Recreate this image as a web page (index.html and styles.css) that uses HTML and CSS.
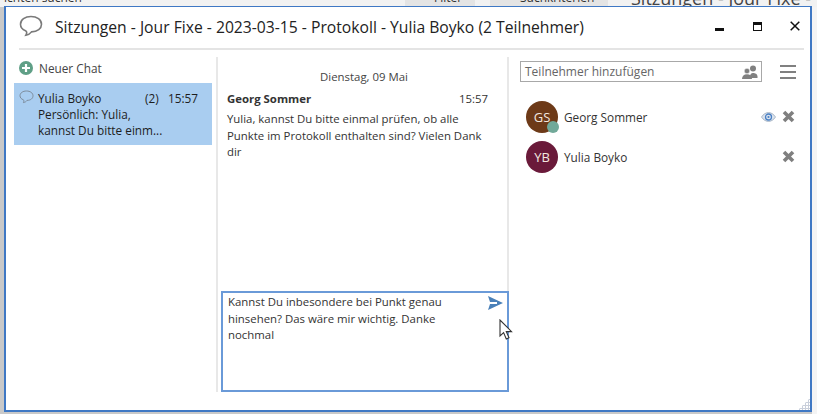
FILE: index.html
```html
<!DOCTYPE html>
<html lang="en">
  <head>
    <meta charset="UTF-8" />
    <title>Sitzungen - Chat</title>
    <link rel="stylesheet" href="styles.css">
  </head>
  <body>
    <div class="backdrop">
      <span class="back-search">ichten suchen</span>
      <span class="back-btn back-filter">Filter</span>
      <span class="back-btn back-search-tools">Suchkriterien</span>
      <span class="back-title">Sitzungen - Jour Fixe - 2</span>
    </div>

    <div class="window">
      <header class="title-bar">
        <svg class="title-icon" width="24" height="22" viewBox="0 0 24 22">
          <path d="M12 1.500C6 1.500 1.500 4.800 1.500 9.200c0 3 2 5.300 5 6.500.9.400 1.200 1 1.200 1.900 0 1-.3 1.800-.8 2.600 2.400-.4 4.400-1.600 5.600-3.300 6-.1 10-3.300 10-7.700 0-4.400-4.500-7.700-10.500-7.700z" fill="none" stroke="#7a7a7a" stroke-width="1.600" />
        </svg>
        <h1>Sitzungen - Jour Fixe - 2023-03-15 - Protokoll - Yulia Boyko (2 Teilnehmer)</h1>
        <div class="win-controls">
          <span class="win-min"></span>
          <span class="win-max"></span>
          <svg class="win-close" width="10" height="10" viewBox="0 0 10 10">
            <path d="M.7.7l8.600 8.600M9.300.7L.7 9.300" stroke="#111" stroke-width="1.500" />
          </svg>
        </div>
      </header>

      <div class="columns">
        <aside class="chats">
          <div class="new-chat">
            <svg width="14" height="14" viewBox="0 0 14 14">
              <circle cx="7" cy="7" r="7" fill="#5f9f86" />
              <path d="M7 3v8M3 7h8" stroke="#fff" stroke-width="2.200" />
            </svg>
            <span>Neuer Chat</span>
          </div>
          <div class="chat-item">
            <svg class="chat-icon" width="15" height="14" viewBox="0 0 15 14">
              <path d="M7.500 1C3.800 1 1 3 1 5.700c0 1.900 1.300 3.300 3.200 4 .6.300.8.700.7 1.300 0 .6-.2 1.100-.5 1.600 1.600-.2 2.900-1.100 3.600-2.200 3.700 0 6-2 6-4.700C14 3 11.200 1 7.500 1z" fill="none" stroke="#7d8c9c" stroke-width="1" />
            </svg>
            <div class="chat-text">
              <div class="chat-head">
                <span class="chat-name">Yulia Boyko</span>
                <span class="chat-count">(2)</span>
                <span class="chat-time">15:57</span>
              </div>
              <div>Persönlich: Yulia,</div>
              <div>kannst Du bitte einm...</div>
            </div>
          </div>
        </aside>

        <main class="conversation">
          <div class="day">Dienstag, 09 Mai</div>
          <div class="message">
            <div class="message-head">
              <strong>Georg Sommer</strong>
              <span>15:57</span>
            </div>
            <p>Yulia, kannst Du bitte einmal prüfen, ob alle Punkte im Protokoll enthalten sind? Vielen Dank dir</p>
          </div>
          <div class="composer">
            <p>Kannst Du inbesondere bei Punkt genau hinsehen? Das wäre mir wichtig. Danke nochmal</p>
            <svg class="send" width="15" height="14" viewBox="0 0 15 14">
              <path d="M0 0l15 7L0 14l2-6h7V6H2z" fill="#4a80b8" />
            </svg>
            <svg class="cursor" width="14" height="21" viewBox="0 0 14 21">
              <path d="M1 1v16l3.600-3.400 2.700 6.400 2.700-1.200-2.700-6.200H12.500z" fill="#fff" stroke="#333" stroke-width="1.100" />
            </svg>
          </div>
        </main>

        <aside class="people">
          <div class="people-top">
            <div class="add-box">
              <span>Teilnehmer hinzufügen</span>
              <svg width="16" height="14" viewBox="0 0 16 14">
                <circle cx="11" cy="3.500" r="3" fill="#808080" />
                <path d="M7.500 13c0-3 1.500-5 3.500-5s4.500 1 4.500 3.500V13z" fill="#808080" />
                <circle cx="5" cy="6" r="2.800" fill="#808080" stroke="#fff" stroke-width=".6" />
                <path d="M0 14c0-3 2-4.800 5-4.800S10 11 10 14z" fill="#808080" />
              </svg>
            </div>
            <div class="menu-icon"><span></span><span></span><span></span></div>
          </div>
          <ul class="person-list">
            <li class="person">
              <div class="avatar avatar-gs">GS<span class="presence"></span></div>
              <span class="person-name">Georg Sommer</span>
              <svg class="eye" width="15" height="10" viewBox="0 0 15 10">
                <path d="M.5 5C2.500 2 4.800.6 7.500.6S12.500 2 14.500 5c-2 3-4.300 4.400-7 4.400S2.500 8 .5 5z" fill="#dbe3ee" stroke="#9aa9bb" stroke-width=".8" />
                <circle cx="7.500" cy="5" r="3" fill="none" stroke="#4a80c4" stroke-width="1.300" />
                <circle cx="7.500" cy="5" r="1.100" fill="#4a80c4" />
              </svg>
              <svg class="remove" width="13" height="13" viewBox="0 0 13 13">
                <path d="M2 2l9 9M11 2l-9 9" stroke="#7f7f7f" stroke-width="3.600" />
              </svg>
            </li>
            <li class="person">
              <div class="avatar avatar-yb">YB</div>
              <span class="person-name">Yulia Boyko</span>
              <svg class="remove" width="13" height="13" viewBox="0 0 13 13">
                <path d="M2 2l9 9M11 2l-9 9" stroke="#7f7f7f" stroke-width="3.600" />
              </svg>
            </li>
          </ul>
        </aside>
      </div>
      <div class="grip"></div>
    </div>
  </body>
</html>
```

FILE: styles.css
```css
* {
  box-sizing: border-box;
}

html, body {
  margin: 0;
  height: 414px;
  overflow: hidden;
}

body {
  font-family: "Open Sans", "Noto Sans", sans-serif;
  font-size: 11.4px;
  color: #333;
  background: linear-gradient(#f4f4f4, #f4f4f4) right top / 5px 100% no-repeat, #c9c9c9;
  position: relative;
}

/* what shows behind the dialog */
.backdrop {
  position: absolute;
  top: 0;
  left: 0;
  right: 0;
  height: 7px;
  overflow: hidden;
  background-color: #f2f2f2;
  color: #333;
}

.backdrop span {
  position: absolute;
  top: -10px;
  line-height: 16px;
}

.back-search {
  left: 4px;
  font-size: 12px;
}

.back-btn {
  font-size: 12px;
  background-color: #e4e4e4;
}

.back-filter {
  left: 405px;
  width: 70px;
  padding-left: 29px;
}

.back-search-tools {
  left: 490px;
  width: 118px;
  padding-left: 30px;
}

.back-title {
  left: 631px;
  font-size: 18px;
  color: #444;
}

.window {
  position: absolute;
  top: 6px;
  left: 4px;
  width: 808px;
  height: 406px;
  background-color: #fff;
  border: 2px solid #3f78c4;
  border-top-width: 1px;
  display: flex;
  flex-direction: column;
  padding: 0 0 18px 0;
}

.title-bar {
  display: flex;
  align-items: center;
  height: 43px;
  margin: 0 6px 0 13px;
  border-bottom: 2px solid #e4e4e4;
  flex-shrink: 0;
}

.title-icon {
  margin-right: 12px;
  margin-top: -4px;
}

h1 {
  flex: 1;
  margin: 0 0 2px;
  font-size: 15.700px;
  font-weight: 400;
  color: #222;
}

.win-controls {
  display: flex;
  align-items: center;
  gap: 28px;
  padding-right: 4px;
  margin-top: -3px;
}

.win-min {
  width: 9px;
  height: 3px;
  margin-top: 6px;
  margin-right: 1px;
  background-color: #111;
}

.win-max {
  width: 9px;
  height: 9px;
  border: 1px solid #111;
  border-top-width: 3px;
}

.columns {
  flex: 1;
  display: flex;
  min-height: 0;
  padding-top: 7px;
}

.chats {
  width: 212px;
  padding-left: 8px;
  border-right: 2px solid #e8e8e8;
  flex-shrink: 0;
}

.new-chat {
  display: flex;
  align-items: center;
  gap: 6px;
  height: 22px;
  padding-left: 5px;
  margin-bottom: 4px;
  color: #444;
  font-size: 11.8px;
}

.chat-item {
  display: flex;
  width: 198px;
  height: 62px;
  background-color: #a9cdf0;
  padding: 7px 0 0 5px;
  color: #1d1d1d;
  line-height: 16px;
  font-size: 11.8px;
}

.chat-icon {
  margin-right: 4px;
  flex-shrink: 0;
}

.chat-text {
  flex: 1;
}

.chat-head {
  display: flex;
}

.chat-name {
  width: 107px;
}

.chat-count {
  width: 23px;
}

.conversation {
  width: 291px;
  padding: 12px 0 0 3px;
  border-right: 2px solid #e8e8e8;
  display: flex;
  flex-direction: column;
  flex-shrink: 0;
}

.day {
  text-align: center;
  color: #444;
  margin-bottom: 5px;
  line-height: 16px;
}

.message {
  padding: 0 19px 0 6px;
  flex: 1;
}

.message-head {
  display: flex;
  justify-content: space-between;
  line-height: 17px;
  margin-bottom: 4px;
}

.message p {
  margin: 0;
  line-height: 16.500px;
}

.composer {
  position: relative;
  height: 101px;
  width: 288px;
  border: 2px solid #6a9ad8;
  padding: 1px 30px 0 5px;
  line-height: 16.500px;
}

.composer p {
  margin: 0;
}

.send {
  position: absolute;
  top: 3px;
  right: 4px;
}

.cursor {
  position: absolute;
  top: 26px;
  right: -6px;
}

.people {
  flex: 1;
  padding: 4px 0 0 11px;
}

.people-top {
  display: flex;
  align-items: center;
}

.add-box {
  width: 242px;
  height: 21px;
  border: 1px solid #a8a8a8;
  display: flex;
  align-items: center;
  justify-content: space-between;
  padding: 0 3px 0 4px;
  color: #666;
  font-size: 12px;
}

.menu-icon {
  margin-left: 18px;
  width: 16px;
  display: flex;
  flex-direction: column;
  gap: 4px;
}

.menu-icon span {
  height: 2px;
  background-color: #808080;
}

.person-list {
  list-style: none;
  margin: 18px 0 0;
  padding: 0 0 0 6px;
}

.person {
  display: flex;
  align-items: center;
  height: 33px;
  margin-bottom: 7px;
  color: #333;
  font-size: 11.800px;
}

.avatar {
  position: relative;
  width: 32px;
  height: 32px;
  border-radius: 50%;
  color: #f4e9e0;
  font-size: 13px;
  display: flex;
  align-items: center;
  justify-content: center;
  margin-right: 6px;
}

.avatar-gs {
  background-color: #6d3a18;
}

.avatar-yb {
  background-color: #6a1a3a;
}

.presence {
  position: absolute;
  right: -1px;
  bottom: 0;
  width: 12px;
  height: 12px;
  border-radius: 50%;
  background-color: #71a999;
}

.person-name {
  flex: 1;
}

.eye {
  margin-right: 6px;
}

.remove {
  margin-right: 15px;
}

.grip {
  position: absolute;
  right: 0;
  bottom: 0;
  width: 12px;
  height: 12px;
  background-image: radial-gradient(#c9cfdb 1px, transparent 1.200px);
  background-size: 3px 3px;
  clip-path: polygon(100% 0, 100% 100%, 0 100%);
}
```
